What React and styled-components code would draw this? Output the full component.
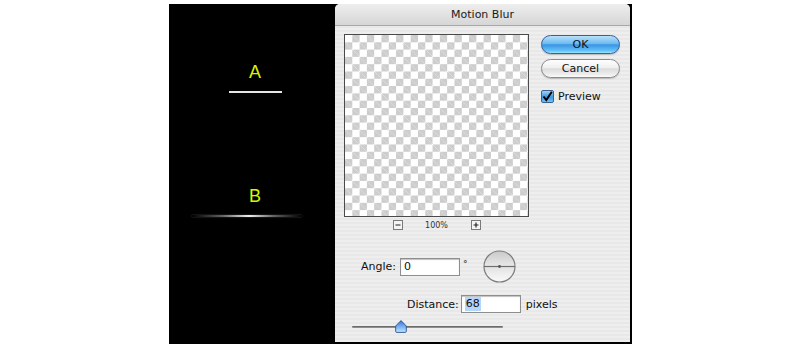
import React from 'react';
import styled, { createGlobalStyle } from 'styled-components';

// Global page reset
const GlobalStyle = createGlobalStyle`
  html, body { margin: 0; padding: 0; background: #fff; }
  body { font-family: "DejaVu Sans", "Liberation Sans", sans-serif; }
`;

// Black backdrop holding the sample + dialog
const Frame = styled.div`
  display: flex;
  margin: 4px 0 0 169px;
  width: 463px;
  height: 340px;
  background: #000;
`;

// Left sample panel ____________________________
const Sample = styled.div`
  width: 166px;
  display: flex;
  flex-direction: column;
  align-items: center;
  padding: 59px 0 0 6px;
  box-sizing: border-box;
`;

const Letter = styled.div`
  font-family: "Liberation Sans", Arial, sans-serif;
  font-size: 18px;
  line-height: 18px;
  color: #d8f500;
  margin-top: ${p => p.$top || 0}px;
`;

const SharpLine = styled.div`
  width: 53px;
  height: 2px;
  margin-top: 10px;
  background: #e6e6e6;
`;

const BlurLine = styled.div`
  width: 110px;
  height: 2px;
  margin: 10px 16px 0 0;
  background: linear-gradient(to right, rgba(255,255,255,0), rgba(200,200,200,.5) 28%, #f0f0f0 52%, rgba(200,200,200,.5) 74%, rgba(255,255,255,0));
  box-shadow: 0 0 1.5px rgba(220,220,220,.45);
`;

// Dialog window ________________________________
const Dialog = styled.div`
  width: 295px;
  height: 338px;
  display: flex;
  flex-direction: column;
  border-radius: 5px 5px 0 0;
  overflow: hidden;
  background: repeating-linear-gradient(#eeeeee 0 2px, #e8e8e8 2px 4px);
`;

const TitleBar = styled.div`
  height: 22px;
  flex: none;
  display: flex;
  align-items: center;
  justify-content: center;
  font-size: 11px;
  color: #1a1a1a;
  background: linear-gradient(#eeeeee, #d6d6d6);
  border-bottom: 1px solid #a8a8a8;
  box-sizing: border-box;
`;

const Body = styled.div`
  display: flex;
  flex-direction: column;
  padding: 8px 0 0 9px;
`;

const TopRow = styled.div`
  display: flex;
`;

const PreviewCol = styled.div`
  width: 185px;
  display: flex;
  flex-direction: column;
`;

const Checker = styled.div`
  width: 185px;
  height: 183px;
  box-sizing: border-box;
  border: 1px solid #4a4a4a;
  background-color: #fff;
  background-image:
    linear-gradient(45deg, #cdcdcd 25%, transparent 25%, transparent 75%, #cdcdcd 75%),
    linear-gradient(45deg, #cdcdcd 25%, transparent 25%, transparent 75%, #cdcdcd 75%);
  background-size: 14.6px 14.6px;
  background-position: 0 0, 7.3px 7.3px;
`;

const ZoomRow = styled.div`
  height: 16px;
  display: flex;
  align-items: center;
  justify-content: center;
  gap: 22px;
`;

const ZoomLabel = styled.span`
  font-size: 8px;
  color: #333;
  width: 24px;
  text-align: center;
`;

const ButtonCol = styled.div`
  margin: 1px 0 0 12px;
  width: 79px;
  display: flex;
  flex-direction: column;
`;

const AquaButton = styled.div`
  height: 19px;
  margin-bottom: 5px;
  border-radius: 10px;
  display: flex;
  align-items: center;
  justify-content: center;
  font-size: 11px;
  color: #111;
  box-sizing: border-box;
  border: 1px solid ${p => (p.$primary ? '#3b5f97' : '#8c8c8c')};
  background: ${p =>
    p.$primary
      ? 'linear-gradient(#b9e1fb 0%, #6cbaf1 45%, #3a95e3 52%, #62c0f6 85%, #9de3ff 100%)'
      : 'linear-gradient(#fefefe 0%, #f0f0f0 45%, #dcdcdc 52%, #eeeeee 85%, #fbfbfb 100%)'};
  box-shadow: 0 1px 1px rgba(0,0,0,.2);
`;

const CheckRow = styled.label`
  display: flex;
  align-items: center;
  gap: 4px;
  margin-top: 7px;
  font-size: 11px;
  color: #111;
`;

const CheckBox = styled.span`
  width: 13px;
  height: 13px;
  box-sizing: border-box;
  border: 1px solid #3d5f8f;
  border-radius: 2px;
  background: linear-gradient(#9ed3f7, #3b95e0 55%, #6fc4f5);
  display: flex;
  align-items: center;
  justify-content: center;
`;

const FieldRow = styled.div`
  display: flex;
  align-items: center;
  height: ${p => p.$h}px;
  margin-top: ${p => p.$top}px;
  padding-left: ${p => p.$indent}px;
  font-size: 11px;
  color: #111;
`;

const Field = styled.div`
  width: 60px;
  height: 18px;
  margin: 0 ${p => p.$after}px 0 ${p => p.$before}px;
  box-sizing: border-box;
  background: #fff;
  border: 1px solid #8e8e8e;
  box-shadow: inset 0 1px 1px rgba(0,0,0,.25);
  display: flex;
  align-items: center;
  padding-left: 3px;
  font-size: 11px;
`;

const Selected = styled.span`
  background: #b4d6fb;
  padding: 0 1px;
  line-height: 14px;
`;

const Degree = styled.span`
  font-size: 9px;
  align-self: flex-start;
  margin-top: 9px;
  margin-right: 15px;
`;

const SliderRow = styled.div`
  position: relative;
  height: 12px;
  margin: 7px 0 0 8px;
  width: 151px;
`;

const Track = styled.div`
  position: absolute;
  left: 0;
  right: 0;
  top: 6px;
  height: 2px;
  border-radius: 1px;
  background: linear-gradient(#5a5a5a, #a0a0a0);
`;

const Thumb = styled.svg`
  position: absolute;
  left: 43px;
  top: 0;
`;

// Icons ________________________________________
const ZoomBox = ({ plus }) => (
  <svg width="10" height="10" viewBox="0 0 10 10">
    <rect x="0.5" y="0.5" width="9" height="9" fill="#f4f4f4" stroke="#7a7a7a" />
    <path d="M2.5 5h5" stroke="#222" strokeWidth="1.2" />
    {plus && <path d="M5 2.5v5" stroke="#222" strokeWidth="1.2" />}
  </svg>
);

const AngleDial = () => (
  <svg width="33" height="33" viewBox="0 0 33 33">
    <defs>
      <linearGradient id="dialTop" x1="0" y1="0" x2="0" y2="1">
        <stop offset="0" stopColor="#c9c9c9" />
        <stop offset="1" stopColor="#e9e9e9" />
      </linearGradient>
      <linearGradient id="dialBot" x1="0" y1="0" x2="0" y2="1">
        <stop offset="0" stopColor="#e2e2e2" />
        <stop offset="1" stopColor="#fafafa" />
      </linearGradient>
    </defs>
    <path d="M1 16.5a15.5 15.5 0 0 1 31 0z" fill="url(#dialTop)" />
    <path d="M1 16.5a15.5 15.5 0 0 0 31 0z" fill="url(#dialBot)" />
    <circle cx="16.5" cy="16.5" r="15.5" fill="none" stroke="#7d7d7d" strokeWidth="1.2" />
    <path d="M1 16.5h31" stroke="#6e6e6e" strokeWidth="1.2" />
    <circle cx="16.5" cy="16.5" r="1.4" fill="#555" />
  </svg>
);

const Check = () => (
  <svg width="11" height="11" viewBox="0 0 11 11">
    <path d="M1.5 5.5 4.3 9 9.8 0.8" fill="none" stroke="#000" strokeWidth="2" />
  </svg>
);

const App = () => (
  <>
    <GlobalStyle />
    <Frame>
      <Sample>
        <Letter>A</Letter>
        <SharpLine />
        <Letter $top={94}>B</Letter>
        <BlurLine />
      </Sample>

      <Dialog>
        <TitleBar>Motion Blur</TitleBar>
        <Body>
          <TopRow>
            <PreviewCol>
              <Checker />
              <ZoomRow>
                <ZoomBox />
                <ZoomLabel>100%</ZoomLabel>
                <ZoomBox plus />
              </ZoomRow>
            </PreviewCol>
            <ButtonCol>
              <AquaButton $primary>OK</AquaButton>
              <AquaButton>Cancel</AquaButton>
              <CheckRow>
                <CheckBox><Check /></CheckBox>
                Preview
              </CheckRow>
            </ButtonCol>
          </TopRow>

          <FieldRow $h={33} $top={17} $indent={17}>
            Angle:
            <Field $before={4} $after={3}>0</Field>
            <Degree>°</Degree>
            <AngleDial />
          </FieldRow>

          <FieldRow $h={18} $top={12} $indent={63}>
            Distance:
            <Field $before={2} $after={5}><Selected>68</Selected></Field>
            pixels
          </FieldRow>

          <SliderRow>
            <Track />
            <Thumb width="12" height="13" viewBox="0 0 12 13">
              <defs>
                <linearGradient id="thumbFill" x1="0" y1="0" x2="0" y2="1">
                  <stop offset="0" stopColor="#3d6fd6" />
                  <stop offset="0.55" stopColor="#7fb4f2" />
                  <stop offset="1" stopColor="#bfe9ff" />
                </linearGradient>
              </defs>
              <path d="M6 0.6 11.3 6v5.4a1 1 0 0 1-1 1H1.7a1 1 0 0 1-1-1V6z" fill="url(#thumbFill)" stroke="#2c4f8f" strokeWidth="0.9" />
            </Thumb>
          </SliderRow>
        </Body>
      </Dialog>
    </Frame>
  </>
);

export default App;
